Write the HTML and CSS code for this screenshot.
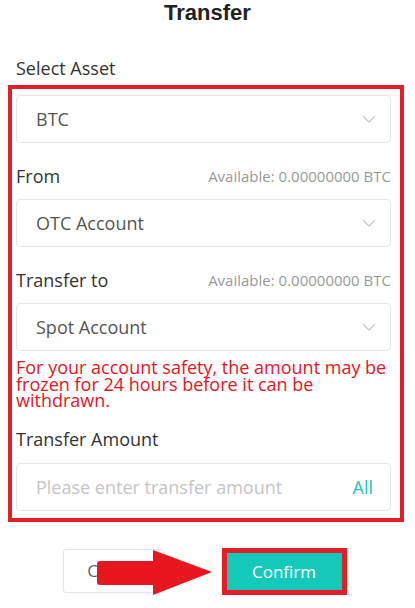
FILE: index.html
```html
<!DOCTYPE html>
<html>
<head>
<meta charset="utf-8">
<link rel="stylesheet" href="styles.css">
</head>
<body>
<div class="page">
  <h1 class="title">Transfer</h1>
  <div class="label-row first"><span class="label">Select Asset</span></div>
  <div class="form">
    <div class="select"><span class="value">BTC</span><svg class="chev" width="14" height="8" viewBox="0 0 14 8"><path d="M1 1 L7 7 L13 1" fill="none" stroke="#c8c8c8" stroke-width="1.3"/></svg></div>
    <div class="label-row"><span class="label">From</span><span class="avail">Available: 0.00000000 BTC</span></div>
    <div class="select"><span class="value">OTC Account</span><svg class="chev" width="14" height="8" viewBox="0 0 14 8"><path d="M1 1 L7 7 L13 1" fill="none" stroke="#c8c8c8" stroke-width="1.3"/></svg></div>
    <div class="label-row"><span class="label">Transfer to</span><span class="avail">Available: 0.00000000 BTC</span></div>
    <div class="select"><span class="value">Spot Account</span><svg class="chev" width="14" height="8" viewBox="0 0 14 8"><path d="M1 1 L7 7 L13 1" fill="none" stroke="#c8c8c8" stroke-width="1.3"/></svg></div>
    <p class="warn">For your account safety, the amount may be frozen for 24 hours before it can be withdrawn.</p>
    <div class="label-row amount"><span class="label">Transfer Amount</span></div>
    <div class="select input"><span class="placeholder">Please enter transfer amount</span><span class="all">All</span></div>
    <div class="annot-box"></div>
  </div>
  <div class="buttons">
    <button class="btn cancel">Cancel</button>
    <button class="btn confirm">Confirm</button>
    <svg class="arrow" width="120" height="48" viewBox="0 0 120 48"><path d="M3 11 H56 V0 L115 22 L56 45 V35 H3 Q0 35 0 32 V14 Q0 11 3 11 Z" fill="#e8161f"/></svg>
  </div>
</div>
</body>
</html>
```
FILE: styles.css
```css
html, body {
  margin: 0;
  padding: 0;
  background: #ffffff;
}
body {
  font-family: "Open Sans", "Noto Sans", sans-serif;
  color: #333333;
  width: 415px;
  height: 608px;
  overflow: hidden;
}
.page {
  width: 375px;
  margin-left: 16px;
  display: flex;
  flex-direction: column;
}
.title {
  margin: 0;
  font-family: "Liberation Sans", Arial, sans-serif;
  font-size: 22px;
  line-height: 26px;
  font-weight: 700;
  text-align: center;
  color: #222222;
  width: 383px;
}
.label-row {
  display: flex;
  justify-content: space-between;
  align-items: center;
  height: 24px;
  margin: 21px 0 11px 0;
}
.label-row.first {
  margin: 30px 0 15px 0;
}
.label {
  font-size: 18px;
  color: #333333;
}
.avail {
  font-size: 15px;
  color: #999999;
}
.form {
  position: relative;
  display: flex;
  flex-direction: column;
}
.select {
  height: 48px;
  box-sizing: border-box;
  border: 1px solid #e6e6e6;
  border-radius: 4px;
  display: flex;
  align-items: center;
  justify-content: space-between;
  padding: 0 14px 0 19px;
}
.value {
  font-size: 18px;
  color: #555555;
}
.chev {
  display: block;
}
.warn {
  margin: 8px 0 0 0;
  font-size: 18px;
  line-height: 16.5px;
  color: #e8141e;
}
.label-row.amount {
  margin: 18px 0 12px 0;
}
.placeholder {
  font-size: 18px;
  color: #c4c4c4;
}
.all {
  font-size: 18px;
  color: #1ec3b3;
  margin-right: 3px;
}
.annot-box {
  position: absolute;
  left: -8px;
  top: -10px;
  width: 396px;
  height: 437px;
  box-sizing: border-box;
  border: 4.5px solid #e41e26;
  pointer-events: none;
}
.buttons {
  position: relative;
  display: flex;
  justify-content: center;
  gap: 57px;
  margin-top: 38px;
  padding-left: 2px;
}
.btn {
  height: 44px;
  font-family: "Open Sans", "Noto Sans", sans-serif;
  font-size: 17px;
  border-radius: 3px;
  cursor: pointer;
}
.cancel {
  width: 102px;
  background: #ffffff;
  border: 1px solid #e3e3e3;
  color: #666666;
}
.confirm {
  width: 125px;
  background: #14c9b9;
  border: none;
  color: #ffffff;
  border-radius: 0;
  outline: 5px solid #e41e26;
  outline-offset: -5px;
  height: 47px;
  margin-top: -1px;
}
.arrow {
  position: absolute;
  left: 81px;
  top: 1px;
}
```
